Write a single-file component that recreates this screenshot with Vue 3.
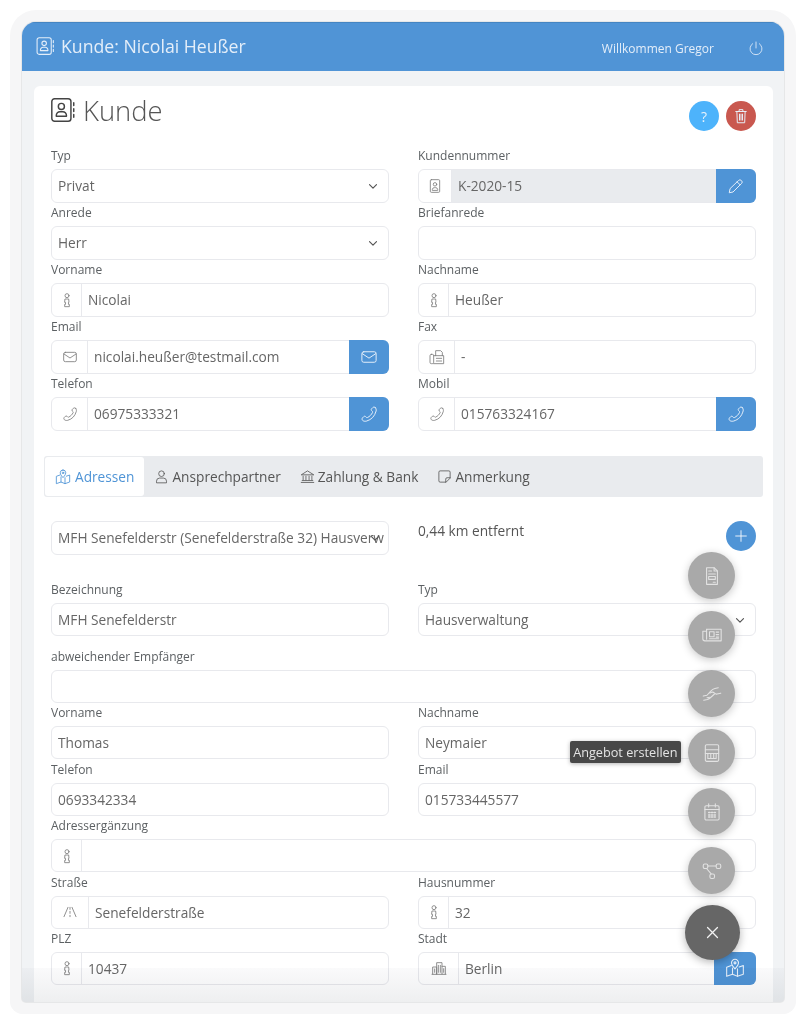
<template>
  <div class="page">
    <div class="window">
      <header class="topbar">
        <div class="topbar-title">
          <svg class="ico ico-20" viewBox="0 0 24 24" v-html="icons.book"></svg>
          <span>Kunde: Nicolai Heußer</span>
        </div>
        <div class="topbar-user">
          <span>Willkommen Gregor</span>
          <svg class="ico ico-16" viewBox="0 0 24 24" v-html="icons.power"></svg>
        </div>
      </header>

      <main class="card">
        <div class="card-head">
          <h1 class="card-title">
            <svg class="ico title-ico" viewBox="0 0 24 24" v-html="icons.book"></svg>
            Kunde
          </h1>
          <div class="card-actions">
            <button class="round help">?</button>
            <button class="round danger">
              <svg class="ico ico-18" viewBox="0 0 24 24" v-html="icons.trash"></svg>
            </button>
          </div>
        </div>

        <div class="form-grid">
          <div v-for="f in customerFields" :key="f.label" class="field">
            <label>{{ f.label }}</label>
            <div class="control" :class="{ select: f.select }">
              <span v-if="f.icon" class="addon" :style="{ width: f.addon + 'px' }">
                <svg class="ico ico-16" viewBox="0 0 24 24" v-html="icons[f.icon]"></svg>
              </span>
              <span class="value" :class="{ locked: f.locked }">{{ f.value }}</span>
              <svg v-if="f.select" class="ico chevron" viewBox="0 0 24 24" v-html="icons.chevron"></svg>
              <button v-if="f.action" class="action">
                <svg class="ico ico-18" viewBox="0 0 24 24" v-html="icons[f.action]"></svg>
              </button>
            </div>
          </div>
        </div>

        <nav class="tabs">
          <a v-for="t in tabs" :key="t.label" class="tab" :class="{ active: t.active }">
            <svg class="ico ico-16" viewBox="0 0 24 24" v-html="icons[t.icon]"></svg>
            {{ t.label }}
          </a>
        </nav>

        <div class="address-head">
          <div class="control select">
            <span class="value clipped">MFH Senefelderstr (Senefelderstraße 32) Hausverw</span>
            <svg class="ico chevron over" viewBox="0 0 24 24" v-html="icons.chevron"></svg>
          </div>
          <div class="distance">
            <span class="distance-text">0,44 km entfernt</span>
            <button class="round add">
              <svg class="ico ico-16" viewBox="0 0 24 24" v-html="icons.plus"></svg>
            </button>
          </div>
        </div>

        <div class="form-grid address-form">
          <div v-for="f in addressFields" :key="f.label + f.value" class="field" :class="{ wide: f.wide }">
            <label>{{ f.label }}</label>
            <div class="control" :class="{ select: f.select }">
              <span v-if="f.icon" class="addon" :style="{ width: f.addon + 'px' }">
                <svg class="ico ico-16" viewBox="0 0 24 24" v-html="icons[f.icon]"></svg>
              </span>
              <span class="value">{{ f.value }}</span>
              <svg v-if="f.select" class="ico chevron" viewBox="0 0 24 24" v-html="icons.chevron"></svg>
              <button v-if="f.action" class="action map-action">
                <svg class="ico ico-20" viewBox="0 0 24 24" v-html="icons[f.action]"></svg>
              </button>
            </div>
          </div>
        </div>
      </main>

      <div class="bottom-fade"></div>
    </div>

    <!-- Schnellaktionen -->
    <div class="fab-stack">
      <div v-for="a in fabs" :key="a.icon" class="fab-row">
        <span v-if="a.tip" class="tooltip">{{ a.tip }}</span>
        <button class="fab">
          <svg class="ico ico-20" viewBox="0 0 24 24" v-html="icons[a.icon]"></svg>
        </button>
      </div>
      <button class="fab-main">
        <svg class="ico" viewBox="0 0 24 24" v-html="icons.close"></svg>
      </button>
    </div>
  </div>
</template>

<script setup>
const icons = {
  book: '<rect x="2.500" y="2" width="17" height="20" rx="2.500"/><circle cx="11" cy="8.800" r="2.700"/><path d="M6.500 17.500v-.8a3.200 3.200 0 0 1 3.200-3.200h2.600a3.200 3.200 0 0 1 3.200 3.200v.8z"/><path d="M22 5.500v2.500M22 10.800v2.500M22 16v2.500"/>',
  power: '<path d="M12 3v9"/><path d="M7 5.500a9 9 0 1 0 10 0"/>',
  trash: '<path d="M5 6h14M9.500 6V3.500h5V6"/><path d="M6.500 6l.6 15h9.800l.6-15"/><path d="M10 9.500v8M12 9.500v8M14 9.500v8"/>',
  chevron: '<path d="M6 9.500l6 6 6-6"/>',
  badge: '<rect x="5" y="2.500" width="14" height="19" rx="1.500"/><circle cx="12" cy="9.500" r="2.600"/><path d="M8 18v-1a3 3 0 0 1 3-2.500h2a3 3 0 0 1 3 2.500v1z"/>',
  pencil: '<path d="M15.500 4.500a2.500 2.500 0 0 1 3.500 0l.5.5a2.500 2.500 0 0 1 0 3.500L8 20l-5 1 1-5z"/><path d="M13.500 6.500l4 4"/>',
  person: '<circle cx="12" cy="5.500" r="3"/><path d="M9.500 10.500h5l.5 5h-.8v3h1.300v3.500H8.500v-3.500h1.300v-3H9z"/>',
  mail: '<rect x="2.500" y="5" width="19" height="14" rx="2.500"/><path d="M3 7.500l9 6 9-6"/>',
  phone: '<path d="M20.500 3.500c-1-1-2.500-1-3.500 0l-1.500 1.500c-.7.8-.7 1.800 0 2.500l1 1c.5.500.5 1 .2 1.500-1.500 3-3.700 5.200-6.700 6.700-.5.3-1 .3-1.500-.2l-1-1c-.7-.7-1.700-.7-2.500 0L3.500 17c-1 1-1 2.500 0 3.500s3 1.500 5 1c7-2 11-6.500 13-13.500.4-1.500 0-3.500-1-4.500z"/>',
  fax: '<rect x="1.500" y="8" width="5.500" height="14" rx="2"/><path d="M7 10h15v12H7"/><path d="M10 10V2.500h7.500L20 5v5"/><path d="M11 14h8M11 18h8"/>',
  map: '<path d="M12 1.500a4.200 4.200 0 0 1 4.200 4.200c0 2.800-4.200 7.300-4.200 7.300S7.800 8.500 7.800 5.700A4.200 4.200 0 0 1 12 1.500z"/><circle cx="12" cy="5.800" r="1.200"/><path d="M7.500 9L2 11v11l7-2.500 6 2.500 7-2.500V9l-5 1.800"/><path d="M9 12v7.500M15 13v9"/>',
  user: '<circle cx="12" cy="7.500" r="4.500"/><path d="M4 21.500v-2a5 5 0 0 1 5-5h6a5 5 0 0 1 5 5v2z"/>',
  bank: '<path d="M2.500 9L12 3l9.500 6z"/><path d="M5 11.500v6M9.500 11.500v6M14.500 11.500v6M19 11.500v6"/><path d="M3.500 18.500h17M2 21.500h20"/>',
  note: '<path d="M21 14V5a2 2 0 0 0-2-2H5a2 2 0 0 0-2 2v14a2 2 0 0 0 2 2h9z"/><path d="M14 21v-5a2 2 0 0 1 2-2h5"/>',
  road: '<path d="M9 5L3 19M15 5l6 14"/><path d="M12 5v3M12 11v3M12 17v2"/>',
  city: '<path d="M2.500 21V10.500h6V21"/><path d="M8.500 21V4h8v17"/><path d="M16.500 9.500h5V21"/><path d="M1.500 21.500h21"/><path d="M5.500 13.500v5M11 8v10.500M14 8v10.500M19 13v5.500"/>',
  plus: '<path d="M12 4v16M4 12h16"/>',
  close: '<path d="M5 5l14 14M19 5L5 19"/>',
  doc: '<path d="M5.500 2h9l4 4v16h-13z"/><path d="M14.500 2v4h4"/><path d="M8 6h3.500M8 9.500h8"/><rect x="8" y="12.500" width="8" height="3.500"/><path d="M13.500 19.500h2.500"/>',
  news: '<path d="M5.500 5H23v14H3.500A2.500 2.500 0 0 1 1 16.500V7.500h4.500"/><path d="M5.500 5v12"/><rect x="9" y="8" width="5.500" height="6"/><path d="M17 8.500h3M17 11.500h3M17 14.500h3M9 16.500h11"/>',
  hands: '<path d="M1.500 14.500l4.500-1 4.500-5c1.500-1.500 3-2.500 5-3l4-1"/><path d="M9.500 11c2-1.500 4-1.500 5.500 0 1 1 2 1.500 3 1l4.500-1"/><path d="M2 19.500l4.500-1c1.500-.5 2.500-1 3.500-2l5-4.500"/><path d="M6 16.500l3-.5"/>',
  calc: '<rect x="4" y="2" width="16" height="20" rx="1.500"/><path d="M4 8h16M4 12.500h16"/><path d="M7 12.500h10v6H7zM10.500 12.500v6M14 12.500v6"/>',
  calendar: '<rect x="3.500" y="4.500" width="17" height="17" rx="1.500"/><path d="M8 2v4M16 2v4M3.500 9h17"/><path d="M8 12.500h1.500M11.300 12.500h1.500M14.600 12.500h1.500M8 15.500h1.500M11.300 15.500h1.500M14.600 15.500h1.500M8 18h1.500M11.300 18h1.500M14.600 18h1.500" stroke-width="1.800"/>',
  nodes: '<rect x="1.500" y="3.500" width="5.500" height="5.500" rx="1.800"/><rect x="17" y="3.500" width="5.500" height="5.500" rx="1.800"/><rect x="9.500" y="15.500" width="5.500" height="5.500" rx="1.800"/><path d="M7 6h10M5.500 9l5.500 6.500"/>'
}

const customerFields = [
  { label: 'Typ', value: 'Privat', select: true },
  { label: 'Kundennummer', value: 'K-2020-15', icon: 'badge', addon: 32, locked: true, action: 'pencil' },
  { label: 'Anrede', value: 'Herr', select: true },
  { label: 'Briefanrede', value: '' },
  { label: 'Vorname', value: 'Nicolai', icon: 'person', addon: 29 },
  { label: 'Nachname', value: 'Heußer', icon: 'person', addon: 29 },
  { label: 'Email', value: 'nicolai.heußer@testmail.com', icon: 'mail', addon: 35, action: 'mail' },
  { label: 'Fax', value: '-', icon: 'fax', addon: 35 },
  { label: 'Telefon', value: '06975333321', icon: 'phone', addon: 35, action: 'phone' },
  { label: 'Mobil', value: '015763324167', icon: 'phone', addon: 35, action: 'phone' }
]

const addressFields = [
  { label: 'Bezeichnung', value: 'MFH Senefelderstr' },
  { label: 'Typ', value: 'Hausverwaltung', select: true },
  { label: 'abweichender Empfänger', value: '', wide: true },
  { label: 'Vorname', value: 'Thomas' },
  { label: 'Nachname', value: 'Neymaier' },
  { label: 'Telefon', value: '0693342334' },
  { label: 'Email', value: '015733445577' },
  { label: 'Adressergänzung', value: '', icon: 'person', addon: 29, wide: true },
  { label: 'Straße', value: 'Senefelderstraße', icon: 'road', addon: 36 },
  { label: 'Hausnummer', value: '32', icon: 'person', addon: 29 },
  { label: 'PLZ', value: '10437', icon: 'person', addon: 29 },
  { label: 'Stadt', value: 'Berlin', icon: 'city', addon: 39, action: 'map' }
]

const tabs = [
  { label: 'Adressen', icon: 'map', active: true },
  { label: 'Ansprechpartner', icon: 'user' },
  { label: 'Zahlung & Bank', icon: 'bank' },
  { label: 'Anmerkung', icon: 'note' }
]

const fabs = [
  { icon: 'doc' },
  { icon: 'news' },
  { icon: 'hands' },
  { icon: 'calc', tip: 'Angebot erstellen' },
  { icon: 'calendar' },
  { icon: 'nodes' }
]
</script>

<style scoped>
.page {
  position: relative;
  height: 1024px;
  overflow: hidden;
  padding: 22px;
  box-sizing: border-box;
  background: #fff;
  font-family: "Open Sans", "Liberation Sans", sans-serif;
  color: #5f6368;
}

.window {
  position: relative;
  height: 980px;
  overflow: hidden;
  background: #f1f3f5;
  border-radius: 14px 14px 4px 4px;
  box-shadow: 0 0 0 1px #e6e7e8, 0 0 0 12px #f6f6f7;
}

.ico {
  display: block;
  flex: none;
  fill: none;
  stroke: currentColor;
  stroke-width: 1.300;
  stroke-linecap: round;
  stroke-linejoin: round;
}

.ico-16 { width: 16px; height: 16px; }
.ico-18 { width: 18px; height: 18px; }
.ico-20 { width: 20px; height: 20px; }

.topbar {
  display: flex;
  align-items: center;
  justify-content: space-between;
  height: 49px;
  padding: 0 20px 0 13px;
  background: #5094d6;
  color: #e4eef9;
  box-shadow: inset 0 1px 0 #4585c2;
}

.topbar-title {
  display: flex;
  align-items: center;
  gap: 6px;
  font-size: 17.700px;
  margin-top: -2px;
}

.topbar-user {
  display: flex;
  align-items: center;
  gap: 34px;
  font-size: 12px;
  margin-top: 3px;
}

.card {
  margin: 15px 11px 0 12px;
  padding: 9px 17px 0;
  height: 960px;
  background: #fff;
  border-radius: 6px;
}

.card-head {
  display: flex;
  justify-content: space-between;
  height: 51px;
}

.card-title {
  display: flex;
  align-items: center;
  gap: 7px;
  height: 30px;
  margin: 0;
  font-size: 27.400px;
  font-weight: 300;
  color: #555;
}

.title-ico {
  width: 27px;
  height: 28px;
  margin-left: -2px;
  color: #444;
  stroke-width: 1.300;
}

.card-actions {
  display: flex;
  gap: 7px;
  padding-top: 6px;
}

.round {
  display: flex;
  align-items: center;
  justify-content: center;
  width: 30px;
  height: 30px;
  padding: 0;
  border: 0;
  border-radius: 50%;
  color: #e7f2fb;
  font-family: inherit;
  font-size: 14px;
}

.help { background: #4db3fb; }
.danger { background: #c9584f; }
.add { background: #4f94d6; }

.form-grid {
  display: grid;
  grid-template-columns: 337.500px 338px;
  column-gap: 29.500px;
}

.field {
  display: flex;
  flex-direction: column;
  height: 57px;
}

.field.wide {
  grid-column: 1 / -1;
}

.field label {
  height: 23px;
  font-size: 12px;
  line-height: 20px;
  color: #5c6063;
}

.control {
  position: relative;
  display: flex;
  align-items: stretch;
  height: 34px;
  box-sizing: border-box;
  border: 1px solid #e8e9ed;
  border-radius: 6px;
  background: #fff;
  font-size: 13.700px;
  line-height: 32px;
  color: #666;
}

.addon {
  display: flex;
  align-items: center;
  justify-content: center;
  flex: none;
  color: #808080;
  border-right: 1px solid #e8e9ed;
}

.value {
  flex: 1;
  min-width: 0;
  padding: 0 6px;
  white-space: nowrap;
  overflow: hidden;
}

.value.locked {
  background: #e9ebee;
}

.chevron {
  align-self: center;
  width: 14px;
  height: 14px;
  margin-right: 8px;
  color: #555;
  stroke-width: 2;
}

.chevron.over {
  position: absolute;
  right: -2px;
  top: 9px;
}

.action {
  display: flex;
  align-items: center;
  justify-content: center;
  flex: none;
  width: 40px;
  margin: -1px -1px -1px 0;
  padding: 0;
  border: 0;
  border-radius: 0 6px 6px 0;
  background: #4f94d6;
  color: #e6f0fa;
}

.map-action {
  width: 42px;
}

.tabs {
  display: flex;
  align-items: stretch;
  height: 41px;
  margin: 25px -7px 0 -7px;
  padding: 1px;
  box-sizing: border-box;
  background: #e9ebee;
  border-radius: 3px;
  font-size: 13.700px;
  color: #555;
}

.tab {
  display: flex;
  align-items: center;
  gap: 3px;
  padding: 0 9px;
  margin-right: 1px;
  white-space: nowrap;
}

.tab .ico {
  width: 15px;
  height: 15px;
}

.tab.active {
  gap: 4px;
  padding: 0 10px;
  background: #fff;
  color: #4f94d6;
  border-radius: 3px;
}

.tab.active .ico {
  width: 16px;
  height: 16px;
}

.address-head {
  display: grid;
  grid-template-columns: 337.500px 338px;
  column-gap: 29.500px;
  height: 59px;
  margin-top: 24px;
}

.distance {
  display: flex;
  justify-content: space-between;
  font-size: 13.700px;
  line-height: 18px;
  color: #555;
}

.distance-text {
  padding-top: 1px;
}

.add {
  color: #fff;
}

.address-form .field {
  height: 56.400px;
}

.address-form .field:nth-child(-n + 2) {
  height: 67px;
}

.address-form .control {
  height: 33px;
}

.bottom-fade {
  position: absolute;
  left: 0;
  right: 0;
  bottom: 0;
  height: 34px;
  background: linear-gradient(to bottom, #fafafb, #eeeff0);
  mix-blend-mode: multiply;
  pointer-events: none;
}

.fab-stack {
  position: absolute;
  right: 66px;
  top: 552px;
  display: flex;
  flex-direction: column;
  align-items: center;
  gap: 12px;
}

.fab-row {
  position: relative;
  height: 47px;
  margin-right: 2px;
}

.fab {
  display: flex;
  align-items: center;
  justify-content: center;
  width: 47px;
  height: 47px;
  padding: 0;
  border: 0;
  border-radius: 50%;
  background: #a9a9a9;
  color: #e2e2e2;
  box-shadow: 0 2px 8px rgba(0, 0, 0, 0.22);
}

.tooltip {
  position: absolute;
  right: 54px;
  top: 12px;
  height: 22px;
  padding: 0 3.500px;
  background: #484848;
  color: #e4e4e4;
  font-size: 12.700px;
  line-height: 22px;
  white-space: nowrap;
  border-radius: 2px;
  box-shadow: 0 1px 4px rgba(0, 0, 0, 0.3);
}

.fab-main {
  display: flex;
  align-items: center;
  justify-content: center;
  width: 55px;
  height: 55px;
  margin-top: -1px;
  padding: 0;
  border: 0;
  border-radius: 50%;
  background: #666;
  color: #f2f2f2;
  box-shadow: 0 2px 8px rgba(0, 0, 0, 0.3);
}

.fab-main .ico {
  width: 17px;
  height: 17px;
  stroke-width: 1.800;
}
</style>
